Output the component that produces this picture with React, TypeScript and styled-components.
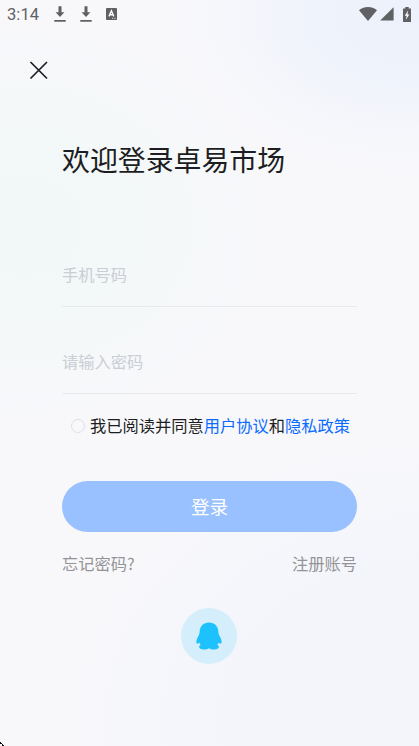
import React from 'react';
import styled, { createGlobalStyle } from 'styled-components';

const GlobalStyle = createGlobalStyle`
  * { box-sizing: border-box; }
  body { margin: 0; }
  button { border: 0; padding: 0; background: none; font: inherit; color: inherit; }
`;

const Screen = styled.main`
  position: relative;
  width: 419px;
  height: 746px;
  overflow: hidden;
  display: flex;
  flex-direction: column;
  font-family: 'Noto Sans CJK SC', sans-serif;
  font-weight: 400;
  color: #1d1e22;
  background:
    radial-gradient(ellipse 240px 170px at 405px 10px, #edf1fb 0%, rgba(238, 242, 251, 0.9) 40%, rgba(244, 246, 252, 0.4) 75%, rgba(248, 248, 251, 0) 100%),
    radial-gradient(ellipse 250px 200px at 20px 225px, #f2f7f8 0%, rgba(243, 248, 248, 0.9) 45%, rgba(248, 248, 251, 0) 100%),
    radial-gradient(ellipse 350px 280px at 419px 720px, #f3f5fb 0%, rgba(243, 245, 251, 0.9) 50%, rgba(248, 248, 251, 0) 100%),
    #f8f8fb;
`;

const StatusBar = styled.header`
  height: 28px;
  display: flex;
  align-items: center;
  justify-content: space-between;
  padding: 0 8px 0 7px;
  color: #606164;
`;

const StatusGroup = styled.div<{ $gap: number }>`
  display: flex;
  align-items: center;
  gap: ${(p) => p.$gap}px;
  svg { display: block; }
`;

const BatterySlot = styled.div`
  margin-left: 6px;
`;

const Clock = styled.span`
  font-family: Roboto, sans-serif;
  width: 32px;
  font-size: 16.5px;
  line-height: 20px;
  letter-spacing: 0.1px;
  margin-right: 1px;
  padding-top: 1px;
`;

const CloseButton = styled.button`
  width: 20px;
  height: 20px;
  margin: 32px 0 0 29px;
  svg { display: block; }
`;

const Content = styled.section`
  display: flex;
  flex-direction: column;
  margin: 59px 62px 0;
`;

const Title = styled.h1`
  margin: 0 0 53px;
  font-size: 27.9px;
  line-height: 40px;
  font-weight: 400;
  white-space: nowrap;
`;

const Field = styled.label`
  height: 75px;
  border-bottom: 1px solid #e8e9eb;
  margin-bottom: 12px;
  padding-top: 30px;
  font-size: 16.25px;
  line-height: 24px;
  color: #cbced5;
  & + & { margin-bottom: 0; }
`;

const Fields = styled.div`
  display: flex;
  flex-direction: column;
`;

const Agreement = styled.div`
  display: flex;
  align-items: center;
  height: 24px;
  margin: 20px 0 0 9px;
  font-size: 16.25px;
  line-height: 24px;
  white-space: nowrap;
`;

const AgreementText = styled.span`
  padding-bottom: 2px;
`;

const Radio = styled.span`
  width: 14px;
  height: 14px;
  border: 1px solid #dfe0e3;
  border-radius: 50%;
  margin-right: 5px;
  flex: none;
`;

const PolicyLink = styled.a`
  color: #0b6bff;
`;

const LoginButton = styled.button`
  height: 51px;
  margin-top: 43px;
  padding-bottom: 2px;
  border-radius: 26px;
  background: #9ac1ff;
  color: #fff;
  font-size: 18.6px;
  line-height: 49px;
`;

const Links = styled.nav`
  display: flex;
  justify-content: space-between;
  margin-top: 19px;
  font-size: 16.25px;
  line-height: 24px;
  color: #939497;
`;

const QQButton = styled.button`
  align-self: center;
  width: 56px;
  height: 56px;
  margin: 33px 1px 0 0;
  border-radius: 50%;
  background: #d5eefc;
  display: grid;
  place-items: center;
`;

const PointerTip = styled.svg`
  position: absolute;
  left: 0;
  bottom: 0;
`;

const DownloadIcon = () => (
  <svg width="12" height="16" viewBox="0 0 12 16" fill="currentColor">
    <path d="M4.5 0.3h3v5.900h2.900L6 11 1.600 6.200h2.900zM.3 14h11.400v1.800H.3z" />
  </svg>
);

const LanguageIcon = () => (
  <svg width="11" height="12" viewBox="0 0 11 12">
    <rect width="11" height="12" rx=".8" fill="currentColor" />
    <path d="M3 8.4 5.4 2.8 7.8 8.4M3.8 6.7H7" fill="none" stroke="#fff" strokeWidth="1.4" />
    <path d="M6 10.3h1M8.2 10.3h1.3" stroke="#fff" strokeWidth=".8" />
  </svg>
);

const WifiIcon = () => (
  <svg width="18" height="14" viewBox="0 0 18 14" fill="currentColor">
    <path d="M0 3.2C5.2-1 12.8-1 18 3.2L9 14z" />
  </svg>
);

const SignalIcon = () => (
  <svg width="14" height="14" viewBox="0 0 14 14" fill="currentColor">
    <path d="M13.6.3V13.6H.2z" />
  </svg>
);

const BatteryIcon = () => (
  <svg width="8" height="15" viewBox="0 0 8 15">
    <path d="M2.3 0h3.4v1.4H8V15H0V1.4h2.3z" fill="currentColor" />
    <path d="M5.1 3.6 1.8 8.7h1.9l-.8 4 3.4-5.2H4.4z" fill="#fff" />
  </svg>
);

const CloseIcon = () => (
  <svg width="20" height="20" viewBox="0 0 20 20">
    <path d="M1.5 2 18 18.5M18 2 1.5 18.5" stroke="#1d1e22" strokeWidth="1.7" />
  </svg>
);

const PenguinIcon = () => (
  <svg width="26" height="28" viewBox="0 0 26 28" fill="#1dc1fc">
    <path d="M13 .5C7.500 .5 3.800 4.200 3.600 10C3.500 12 2.600 13.800 1.500 15.700C.8 17.200.3 18.600.4 20c.1 1.300.6 1.900 1.200 1.700.6-.2 1-.7 1.500-1.200.4 1 .9 1.800 1.700 2.600-1.100.4-1.700 1.100-1.700 1.900 0 1.600 1.900 2.500 4.900 2.500 2.100 0 4-.4 5-1.300 1 .9 2.900 1.300 5 1.300 3 0 4.900-.9 4.900-2.500 0-.8-.6-1.500-1.700-1.900.8-.8 1.300-1.600 1.700-2.600.5.500.9 1 1.500 1.200.6.200 1.100-.4 1.200-1.700.1-1.400-.4-2.800-1.100-4.300C23.400 13.800 22.500 12 22.400 10 22.200 4.200 18.500 .5 13 .5z" />
  </svg>
);

export default function App() {
  return (
    <>
      <GlobalStyle />
      <Screen>
        <StatusBar>
          <StatusGroup $gap={14}>
            <Clock>3:14</Clock>
            <DownloadIcon />
            <DownloadIcon />
            <LanguageIcon />
          </StatusGroup>
          <StatusGroup $gap={3}>
            <WifiIcon />
            <SignalIcon />
            <BatterySlot><BatteryIcon /></BatterySlot>
          </StatusGroup>
        </StatusBar>
        <CloseButton aria-label="关闭"><CloseIcon /></CloseButton>
        <Content>
          <Title>欢迎登录卓易市场</Title>
          <Fields>
            <Field>手机号码</Field>
            <Field>请输入密码</Field>
          </Fields>
          <Agreement>
            <Radio />
            <AgreementText>我已阅读并同意<PolicyLink>用户协议</PolicyLink>和<PolicyLink>隐私政策</PolicyLink></AgreementText>
          </Agreement>
          <LoginButton>登录</LoginButton>
          <Links>
            <a>忘记密码?</a>
            <a>注册账号</a>
          </Links>
          <QQButton aria-label="QQ"><PenguinIcon /></QQButton>
        </Content>
        <PointerTip width="4" height="4" viewBox="0 0 4 4">
          <path d="M0 0h1v1h1v1h1v1h1v1H2V3H1V2H0z" fill="#111" />
          <path d="M1 2h1v1H1z" fill="#fff" />
        </PointerTip>
      </Screen>
    </>
  );
}
